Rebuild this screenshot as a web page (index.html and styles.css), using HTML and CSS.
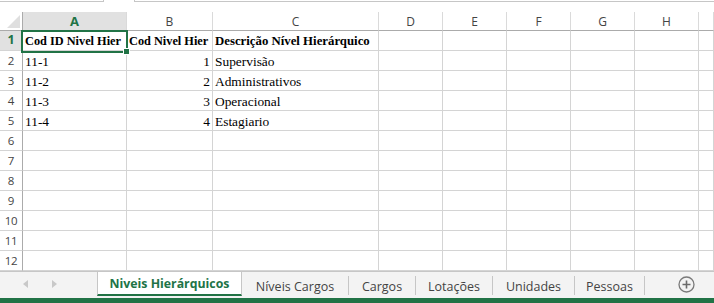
FILE: index.html
```html
<!DOCTYPE html>
<html lang="pt">
<head>
<meta charset="utf-8">
<title>Niveis Hierárquicos</title>
<link rel="stylesheet" href="styles.css">
</head>
<body>
<div class="app">
  <div class="topstrip">
    <div class="namebox"></div>
    <div class="formulabar"></div>
  </div>
  <div class="sheet">
    <div class="grid">
      <div class="corner"></div>
      <div class="colhdr sel">A</div>
      <div class="colhdr">B</div>
      <div class="colhdr">C</div>
      <div class="colhdr">D</div>
      <div class="colhdr">E</div>
      <div class="colhdr">F</div>
      <div class="colhdr">G</div>
      <div class="colhdr">H</div>
      <div class="colhdr"></div>

      <div class="rowhdr sel">1</div>
      <div class="cell b">Cod ID Nivel Hier</div>
      <div class="cell b">Cod Nivel Hier</div>
      <div class="cell b wide">Descrição Nível Hierárquico</div>
      <div class="cell"></div><div class="cell"></div><div class="cell"></div><div class="cell"></div><div class="cell"></div><div class="cell"></div>

      <div class="rowhdr">2</div>
      <div class="cell">11-1</div>
      <div class="cell num">1</div>
      <div class="cell">Supervisão</div>
      <div class="cell"></div><div class="cell"></div><div class="cell"></div><div class="cell"></div><div class="cell"></div><div class="cell"></div>

      <div class="rowhdr">3</div>
      <div class="cell">11-2</div>
      <div class="cell num">2</div>
      <div class="cell">Administrativos</div>
      <div class="cell"></div><div class="cell"></div><div class="cell"></div><div class="cell"></div><div class="cell"></div><div class="cell"></div>

      <div class="rowhdr">4</div>
      <div class="cell">11-3</div>
      <div class="cell num">3</div>
      <div class="cell">Operacional</div>
      <div class="cell"></div><div class="cell"></div><div class="cell"></div><div class="cell"></div><div class="cell"></div><div class="cell"></div>

      <div class="rowhdr">5</div>
      <div class="cell">11-4</div>
      <div class="cell num">4</div>
      <div class="cell">Estagiario</div>
      <div class="cell"></div><div class="cell"></div><div class="cell"></div><div class="cell"></div><div class="cell"></div><div class="cell"></div>

      <div class="rowhdr">6</div>
      <div class="cell"></div><div class="cell"></div><div class="cell"></div><div class="cell"></div><div class="cell"></div><div class="cell"></div><div class="cell"></div><div class="cell"></div><div class="cell"></div>
      <div class="rowhdr">7</div>
      <div class="cell"></div><div class="cell"></div><div class="cell"></div><div class="cell"></div><div class="cell"></div><div class="cell"></div><div class="cell"></div><div class="cell"></div><div class="cell"></div>
      <div class="rowhdr">8</div>
      <div class="cell"></div><div class="cell"></div><div class="cell"></div><div class="cell"></div><div class="cell"></div><div class="cell"></div><div class="cell"></div><div class="cell"></div><div class="cell"></div>
      <div class="rowhdr">9</div>
      <div class="cell"></div><div class="cell"></div><div class="cell"></div><div class="cell"></div><div class="cell"></div><div class="cell"></div><div class="cell"></div><div class="cell"></div><div class="cell"></div>
      <div class="rowhdr">10</div>
      <div class="cell"></div><div class="cell"></div><div class="cell"></div><div class="cell"></div><div class="cell"></div><div class="cell"></div><div class="cell"></div><div class="cell"></div><div class="cell"></div>
      <div class="rowhdr">11</div>
      <div class="cell"></div><div class="cell"></div><div class="cell"></div><div class="cell"></div><div class="cell"></div><div class="cell"></div><div class="cell"></div><div class="cell"></div><div class="cell"></div>
      <div class="rowhdr">12</div>
      <div class="cell"></div><div class="cell"></div><div class="cell"></div><div class="cell"></div><div class="cell"></div><div class="cell"></div><div class="cell"></div><div class="cell"></div><div class="cell"></div>
    </div>
    <div class="selection"><span class="handle"></span></div>
  </div>
  <div class="tabbar">
    <div class="nav">
      <svg class="arrow" width="6" height="8" viewBox="0 0 6 8"><path d="M5 0 L0 4 L5 8 Z" fill="#c8c8c8"/></svg>
      <svg class="arrow" width="6" height="8" viewBox="0 0 6 8"><path d="M1 0 L6 4 L1 8 Z" fill="#c8c8c8"/></svg>
    </div>
    <div class="tab active">Niveis Hierárquicos</div>
    <div class="tab w107">Níveis Cargos</div>
    <div class="tab w67">Cargos</div>
    <div class="tab w77">Lotações</div>
    <div class="tab w82">Unidades</div>
    <div class="tab w70">Pessoas</div>
    <div class="spacer"></div>
    <svg class="plus" width="17" height="17" viewBox="0 0 17 17">
      <circle cx="8.5" cy="8.5" r="7.5" fill="none" stroke="#7a7a7a" stroke-width="1.3"/>
      <path d="M8.5 4.5 V12.5 M4.5 8.5 H12.5" stroke="#6a6a6a" stroke-width="1.6"/>
    </svg>
  </div>
  <div class="statusbar"></div>
</div>
</body>
</html>
```
FILE: styles.css
```css
* { box-sizing: border-box; }
html, body { margin: 0; padding: 0; background: #fff; }
body { width: 714px; height: 303px; overflow: hidden; }
.app { display: flex; flex-direction: column; width: 714px; height: 303px; }

.topstrip { height: 12px; display: flex; gap: 30px; align-items: flex-start; }
.namebox { width: 104px; height: 2px; border-right: 1px solid #c6c6c6; border-bottom: 1px solid #c6c6c6; }
.formulabar { flex: 1; height: 2px; border-left: 1px solid #c6c6c6; border-bottom: 1px solid #c6c6c6; }

.sheet { position: relative; }
.grid {
  display: grid;
  grid-template-columns: 23px 104px 86px 166px 64px 64px 64px 64px 64px 1fr;
  grid-template-rows: 19px repeat(12, 20px);
}
.corner { border-right: 1px solid #ababab; border-bottom: 1px solid #ababab; position: relative; background: #fff; }
.corner::after {
  content: ""; position: absolute; right: 2px; bottom: 2px; width: 0; height: 0;
  border-left: 13px solid transparent; border-bottom: 13px solid #dfdfdf;
}
.colhdr {
  border-right: 1px solid #dadada; border-bottom: 1px solid #ababab;
  font-family: "Open Sans", "Noto Sans", sans-serif; font-size: 12px; color: #444;
  display: flex; align-items: center; justify-content: center; line-height: 1;
  padding-top: 1px;
}
.colhdr.sel { background: #e1e1e1; color: #217346; font-weight: 700; font-size: 13px; }
.rowhdr {
  border-right: 1px solid #ababab; border-bottom: 1px solid #d4d4d4;
  font-family: "Open Sans", "Noto Sans", sans-serif; font-size: 11.5px; color: #444;
  display: flex; align-items: center; justify-content: center; line-height: 1;
  letter-spacing: -0.3px;
}
.rowhdr.sel { background: #e1e1e1; color: #217346; font-weight: 700; font-size: 12.5px; }
.cell {
  border-right: 1px solid #d4d4d4; border-bottom: 1px solid #d4d4d4;
  font-family: "Liberation Serif", "Times New Roman", serif; font-size: 13.4px; color: #000;
  display: flex; align-items: flex-end; padding: 0 2px 1px 2px; line-height: 15px;
  white-space: nowrap; overflow: visible;
}
.cell.b { font-weight: 700; font-size: 12.3px; }
.cell.b.wide { font-size: 12.8px; }
.cell.num { justify-content: flex-end; }

.selection {
  position: absolute; left: 21px; top: 18px; width: 107px; height: 23px;
  border: 2px solid #217346; pointer-events: none;
}
.handle {
  position: absolute; right: -4px; bottom: -4px; width: 7px; height: 7px;
  background: #217346; border: 1px solid #fff;
}

.tabbar {
  height: 27px; background: #f3f3f3; border-top: 1px solid #c6c6c6;
  display: flex; align-items: flex-start;
  font-family: "Open Sans", "Noto Sans", sans-serif; font-size: 12.5px; color: #444;
}
.nav { width: 97px; height: 100%; display: flex; align-items: center; gap: 22px; padding-left: 23px; padding-bottom: 2px; }
.tab {
  margin-top: 4px; height: 19px; line-height: 19px; padding: 0;
  border-right: 1px solid #c6c6c6; white-space: nowrap; text-align: center;
  padding-top: 1px;
}
.w107 { width: 107px; }
.w67 { width: 67px; }
.w77 { width: 77px; }
.w82 { width: 82px; }
.w70 { width: 70px; }
.tab.active {
  width: 145px; margin-top: 0; height: 24px; line-height: 22px; background: #fff;
  border-left: 1px solid #c6c6c6; border-right: 1px solid #c6c6c6;
  border-bottom: 2px solid #217346; color: #217346; font-weight: 700;
  font-size: 12.3px; padding-top: 1px;
}
.spacer { flex: 1; }
.plus { margin-top: 4px; margin-right: 19px; }
.statusbar { height: 5px; background: #217346; }
```
